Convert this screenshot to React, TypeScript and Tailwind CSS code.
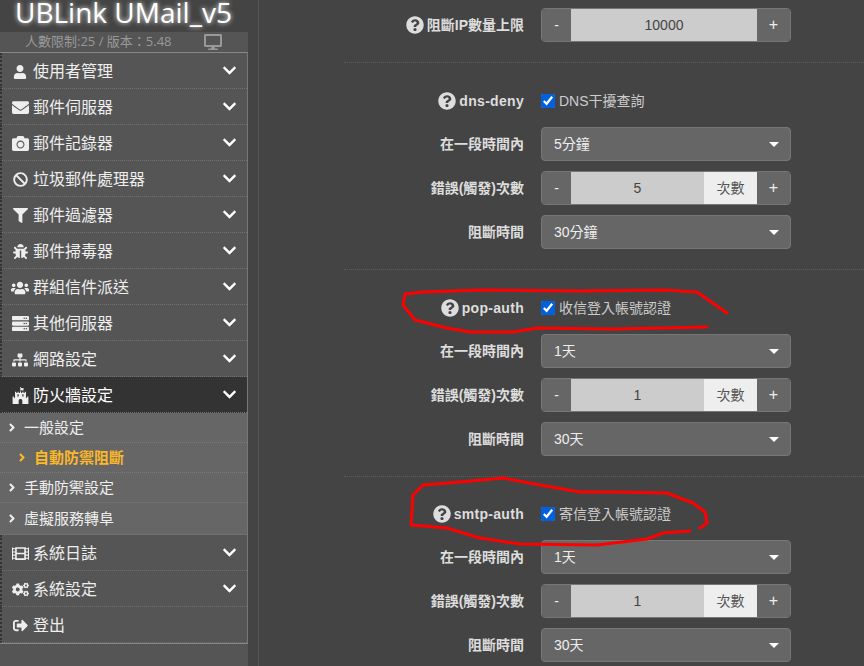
import React from "react";
import {
  FaUser, FaEnvelope, FaCamera, FaBan, FaFilter, FaBug, FaUsers, FaServer, FaSitemap,
  FaFortAwesome, FaFilm, FaCogs, FaSignOutAlt, FaQuestionCircle, FaDesktop, FaChevronDown, FaAngleRight,
} from "react-icons/fa";

const cjk = { fontFamily: '"Liberation Sans","Noto Sans CJK TC",sans-serif' };

function MenuRow({ icon, label, dark, noArrow, size = 17 }: { icon: React.ReactNode; label: string; dark?: boolean; noArrow?: boolean; size?: number }) {
  return (
    <div
      className={`flex items-center h-[36px] border-b border-dotted border-[#6f6f6f] border-l-2 border-l-[#333] ${dark ? "bg-[#333] text-white" : "bg-[#555] text-[#eee]"}`}
    >
      <span className="w-[26px] ml-[5px] pt-[2px] flex justify-center items-center text-[#eee]" style={{ fontSize: size }}>{icon}</span>
      <span className="text-[16px] leading-none pt-[3px]">{label}</span>
      {!noArrow && <FaChevronDown className="ml-auto mr-[10px] text-[15px] text-white" />}
    </div>
  );
}

function SubRow({ label, active, h = 30 }: { label: string; active?: boolean; h?: number }) {
  return (
    <div
      className={`flex items-center border-b border-dotted border-[#7a7a7a] bg-[#666] ${active ? "pl-[17px] text-[#fbb829] font-bold" : "pl-[7px] text-[#eee]"}`}
      style={{ height: h }}
    >
      <FaAngleRight className="text-[13px] w-[10px]" />
      <span className="ml-[7px] text-[15px] leading-none">{label}</span>
    </div>
  );
}

function Label({ children }: { children: React.ReactNode }) {
  return <div className="w-[180px] flex justify-end items-center gap-[3px] text-[14px] font-bold text-[#ddd]">{children}</div>;
}

function Stepper({ value, unit }: { value: string; unit?: boolean }) {
  return (
    <div className="flex w-[250px] h-[34px] rounded-[4px] border border-[#777] overflow-hidden text-[14px]">
      <div className="w-[29px] bg-[#666] text-[#eee] flex items-center justify-center">-</div>
      <div className="flex-1 bg-[#ccc] text-[#444] flex items-center justify-center">{value}</div>
      {unit && <div className="w-[53px] bg-[#eee] text-[#555] flex items-center justify-center">次數</div>}
      <div className="w-[33px] bg-[#666] text-[#eee] flex items-center justify-center text-[16px]">+</div>
    </div>
  );
}

function Select({ value }: { value: string }) {
  return (
    <div className="flex items-center w-[250px] h-[34px] rounded-[4px] border border-[#777] bg-[#666] text-[#eee] text-[14px] pl-[12px] pr-[11px]">
      <span>{value}</span>
      <span className="ml-auto w-0 h-0 border-x-[5px] border-t-[5px] border-x-transparent border-t-white" />
    </div>
  );
}

function Row({ label, children }: { label: React.ReactNode; children: React.ReactNode }) {
  return (
    <div className="flex gap-[17px] mb-[10px] items-center">
      <Label>{label}</Label>
      {children}
    </div>
  );
}

function Heading({ name, text }: { name: string; text: string }) {
  return (
    <div className="flex gap-[17px] mb-[10px] h-[32px] items-center">
      <Label>
        <FaQuestionCircle className="text-[18px] text-[#ddd]" />
        <span className="tracking-[0.3px]">{name}</span>
      </Label>
      <label className="flex items-center gap-[4px] text-[14px] text-[#ccc]">
        <input type="checkbox" checked readOnly className="w-[14px] h-[14px] m-0 accent-[#0060df]" />
        {text}
      </label>
    </div>
  );
}

function Group({ name, text, win, count, block, pt = 22 }: { name: string; text: string; win: string; count: string; block: string; pt?: number }) {
  return (
    <div className="border-t border-dotted border-[#5c5c5c] mt-[20px]" style={{ paddingTop: pt }}>
      <Heading name={name} text={text} />
      <Row label="在一段時間內"><Select value={win} /></Row>
      <Row label="錯誤(觸發)次數"><Stepper value={count} unit /></Row>
      <Row label="阻斷時間"><Select value={block} /></Row>
    </div>
  );
}

export default function App() {
  return (
    <div className="relative flex w-[864px] h-[666px] overflow-hidden bg-[#444]" style={cjk}>
      <aside className="w-[248px] shrink-0 flex flex-col bg-[#555]">
        <div className="h-[32px] bg-[#444] flex items-start pl-[15px] shrink-0">
          <span
            className="block text-[28px] leading-[25px] text-white whitespace-nowrap [text-shadow:0_0_5px_#fff]"
            style={{ fontFamily: '"Open Sans",sans-serif' }}
          >
            UBLink UMail_v5
          </span>
        </div>
        <div
          className="h-[20px] flex items-center pl-[25px] text-[13px] text-[#999] whitespace-nowrap shrink-0"
          style={{ fontFamily: '"Open Sans","Noto Sans CJK TC",sans-serif' }}
        >
          <span>人數限制:25 / 版本：5.48</span>
          <FaDesktop className="absolute left-[204px] top-[33px] text-[18px] text-[#999]" />
        </div>
        <div className="border-t border-[#888] border-r border-r-[#777] border-b border-b-[#888]">
          <MenuRow icon={<FaUser />} label="使用者管理" size={14} />
          <MenuRow icon={<FaEnvelope />} label="郵件伺服器" />
          <MenuRow icon={<FaCamera />} label="郵件記錄器" />
          <MenuRow icon={<FaBan />} label="垃圾郵件處理器" size={15} />
          <MenuRow icon={<FaFilter />} label="郵件過濾器" size={15} />
          <MenuRow icon={<FaBug />} label="郵件掃毒器" size={15} />
          <MenuRow icon={<FaUsers />} label="群組信件派送" size={18} />
          <MenuRow icon={<FaServer />} label="其他伺服器" />
          <MenuRow icon={<FaSitemap />} label="網路設定" size={16} />
          <MenuRow icon={<FaFortAwesome />} label="防火牆設定" dark size={17} />
          <SubRow label="一般設定" />
          <SubRow label="自動防禦阻斷" active />
          <SubRow label="手動防禦設定" />
          <SubRow label="虛擬服務轉阜" h={32} />
          <MenuRow icon={<FaFilm />} label="系統日誌" />
          <MenuRow icon={<FaCogs />} label="系統設定" size={17} />
          <MenuRow icon={<FaSignOutAlt />} label="登出" noArrow size={15} />
        </div>
      </aside>
      <div className="w-[11px] shrink-0 border-r border-[#555]" />
      <main className="flex-1 pt-[8px] pl-[85px]">
        <Row label={<><FaQuestionCircle className="text-[18px] text-[#ddd]" /><span>阻斷IP數量上限</span></>}>
          <Stepper value="10000" />
        </Row>
        <Group name="dns-deny" text="DNS干擾查詢" win="5分鐘" count="5" block="30分鐘" />
        <Group name="pop-auth" text="收信登入帳號認證" win="1天" count="1" block="30天" />
        <Group name="smtp-auth" text="寄信登入帳號認證" win="1天" count="1" block="30天" pt={21} />
      </main>
      <svg className="absolute inset-0 pointer-events-none" width="864" height="666" fill="none" stroke="#ff0000" strokeWidth="3" strokeLinecap="round" strokeLinejoin="round">
        <path d="M727 313 L697 292 L663 290 L580 291 L480 290 L423 292 L405 294 L403 305 L415 320 L447 328 L470 332 L513 332 L537 328 L613 329 L707 327" />
        <path d="M700 528 L707 523 L705 512 L693 503 L667 493 L613 492 L580 492 L540 485 L503 478 L460 482 L423 485 L413 495 L411 525 L447 528 L480 538 L520 544 L597 545 L647 539 L663 533 L690 531" />
      </svg>
    </div>
  );
}
